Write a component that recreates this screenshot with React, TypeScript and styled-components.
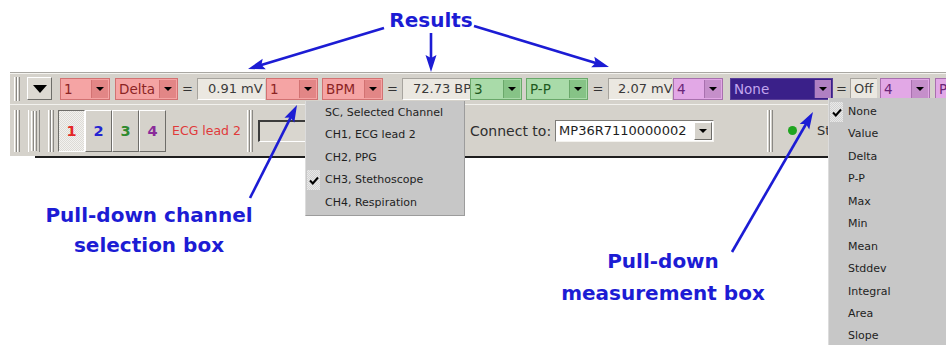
import styled, { createGlobalStyle } from "styled-components";

const GlobalStyle = createGlobalStyle`
    html, body {
        margin: 0;
        padding: 0;
        background: #ffffff;
    }
`;

const BLUE = "#1c1cd4";
const UI_FONT = `"DejaVu Sans", "Liberation Sans", sans-serif`;

type Tone = "red" | "green" | "purple" | "indigo";

const tones: Record<Tone, { bg: string; border: string; btn: string; text: string }> = {
    red: { bg: "#f5a4a4", border: "#d27272", btn: "#e28686", text: "#8c2424" },
    green: { bg: "#a9dba9", border: "#6aa86a", btn: "#86c386", text: "#1f5a1f" },
    purple: { bg: "#e2a8e6", border: "#a870ae", btn: "#c58fca", text: "#6a2478" },
    indigo: { bg: "#3a2089", border: "#5a3f98", btn: "#b080c2", text: "#c3a6ee" },
};

const Page = styled.div`
    position: relative;
    width: 946px;
    height: 345px;
    overflow: hidden;
    background: #ffffff;
    font-family: ${UI_FONT};
`;

const Toolbar = styled.div`
    margin-top: 72px;
    margin-left: 10px;
    width: 936px;
    background: #d5d2cb;
    border-top: 1px solid #a9a7a2;
    box-shadow: inset 0 1px 0 #f4f3ef;
`;

const TopRow = styled.div`
    display: flex;
    align-items: center;
    height: 31px;
    padding-left: 4px;
    white-space: nowrap;
`;

const BottomRow = styled.div`
    position: relative;
    display: flex;
    align-items: center;
    height: 51px;
    padding-left: 4px;
    border-top: 1px solid #f2f1ed;
    white-space: nowrap;

    &::after {
        content: "";
        position: absolute;
        left: 25px;
        right: 0;
        bottom: -2px;
        height: 2px;
        background: #1e1e1e;
    }
`;

const Grip = styled.div<{ $h: number; $ml?: number }>`
    flex: none;
    width: 6px;
    height: ${(p) => p.$h}px;
    margin-left: ${(p) => p.$ml ?? 0}px;
    background: linear-gradient(
        to right,
        #ffffff 0 1px,
        #d5d2cb 1px 2px,
        #8a8884 2px 3px,
        #ffffff 3px 4px,
        #d5d2cb 4px 5px,
        #8a8884 5px 6px
    );
`;

const GripBox = styled.div`
    flex: none;
    display: flex;
    justify-content: center;
    align-items: center;
    width: 10px;
    height: 42px;
    margin-left: 8px;
    border-left: 1px solid #ffffff;
    border-right: 1px solid #8a8884;
`;

const DropButton = styled.div`
    flex: none;
    display: flex;
    align-items: center;
    justify-content: center;
    width: 25px;
    height: 23px;
    margin-left: 7px;
    box-sizing: border-box;
    background: #dcd9d2;
    border-top: 1px solid #ffffff;
    border-left: 1px solid #ffffff;
    border-right: 1px solid #6e6d69;
    border-bottom: 1px solid #6e6d69;
`;

const BigTriangle = styled.div`
    width: 0;
    height: 0;
    border-left: 7px solid transparent;
    border-right: 7px solid transparent;
    border-top: 8px solid #000000;
`;

const Triangle = styled.div`
    width: 0;
    height: 0;
    border-left: 4px solid transparent;
    border-right: 4px solid transparent;
    border-top: 4px solid #000000;
`;

const ComboBox = styled.div<{ $tone: Tone; $w: number; $ml: number }>`
    flex: none;
    display: flex;
    align-items: stretch;
    width: ${(p) => p.$w}px;
    height: 22px;
    margin-left: ${(p) => p.$ml}px;
    box-sizing: border-box;
    background: ${(p) => tones[p.$tone].bg};
    border: 1px solid ${(p) => tones[p.$tone].border};
    color: ${(p) => tones[p.$tone].text};
    font-size: 13.5px;
    overflow: hidden;
`;

const ComboText = styled.div`
    flex: 1;
    padding-left: 3px;
    line-height: 20px;
    overflow: hidden;
`;

const ComboArrow = styled.div<{ $tone: Tone }>`
    flex: none;
    display: flex;
    align-items: center;
    justify-content: center;
    width: 16px;
    margin: 1px;
    background: ${(p) => tones[p.$tone].btn};
    border-left: 1px solid ${(p) => tones[p.$tone].border};
`;

const Equals = styled.div<{ $w: number }>`
    flex: none;
    width: ${(p) => p.$w}px;
    text-align: center;
    font-size: 13px;
    color: #333333;
`;

const ValueBox = styled.div<{ $w: number; $pad: number }>`
    flex: none;
    width: ${(p) => p.$w}px;
    height: 22px;
    box-sizing: border-box;
    padding-left: ${(p) => p.$pad}px;
    background: #ebe8e1;
    border-top: 1px solid #a7a49e;
    border-left: 1px solid #a7a49e;
    border-bottom: 1px solid #ffffff;
    font-size: 13px;
    line-height: 20px;
    color: #3a3a3a;
    overflow: hidden;
`;

const TabGroup = styled.div`
    flex: none;
    display: flex;
    margin-left: 4px;
`;

const TabButton = styled.div<{ $color: string; $pressed?: boolean }>`
    flex: none;
    display: flex;
    align-items: center;
    justify-content: center;
    width: 27px;
    height: 42px;
    box-sizing: border-box;
    font-family: "DejaVu Sans", sans-serif;
    font-weight: bold;
    font-size: 14.5px;
    color: ${(p) => p.$color};
    background: ${(p) =>
        p.$pressed
            ? "repeating-conic-gradient(#f3f2ef 0 25%, #dddbd6 0 50%) 0 0 / 2px 2px"
            : "#d5d2cb"};
    border-top: 1px solid ${(p) => (p.$pressed ? "#6e6d69" : "#ffffff")};
    border-left: 1px solid ${(p) => (p.$pressed ? "#6e6d69" : "#ffffff")};
    border-right: 1px solid ${(p) => (p.$pressed ? "#ffffff" : "#6e6d69")};
    border-bottom: 1px solid ${(p) => (p.$pressed ? "#ffffff" : "#6e6d69")};
`;

const LeadLabel = styled.div`
    flex: none;
    width: 75px;
    margin-left: 6px;
    font-size: 12.5px;
    color: #e03a3a;
`;

const Field = styled.div`
    flex: none;
    width: 200px;
    height: 22px;
    margin-left: 5px;
    box-sizing: border-box;
    background: #d9d6cf;
    border-top: 2px solid #3c3c3c;
    border-left: 2px solid #3c3c3c;
    border-bottom: 1px solid #ffffff;
    border-right: 1px solid #ffffff;
`;

const ConnectLabel = styled.div`
    flex: none;
    margin-left: 12px;
    font-size: 14px;
    color: #2e2e2e;
`;

const DeviceSelect = styled.div`
    flex: none;
    display: flex;
    align-items: stretch;
    width: 159px;
    height: 22px;
    margin-left: 4px;
    box-sizing: border-box;
    background: #ffffff;
    border-top: 1px solid #7d7b77;
    border-left: 1px solid #7d7b77;
    border-bottom: 1px solid #f4f3ef;
    border-right: 1px solid #f4f3ef;
    font-size: 13px;
    color: #1e1e1e;
`;

const DeviceText = styled.div`
    flex: 1;
    padding-left: 3px;
    line-height: 20px;
`;

const DeviceArrow = styled.div`
    flex: none;
    display: flex;
    align-items: center;
    justify-content: center;
    width: 16px;
    margin: 1px;
    background: #d5d2cb;
    border-top: 1px solid #ffffff;
    border-left: 1px solid #ffffff;
    border-right: 1px solid #6e6d69;
    border-bottom: 1px solid #6e6d69;
`;

const StatusDot = styled.div`
    flex: none;
    width: 9px;
    height: 9px;
    margin-left: 15px;
    border-radius: 50%;
    background: #1fa51f;
`;

const StatusText = styled.div`
    flex: none;
    margin-left: 20px;
    font-size: 13px;
    color: #2e2e2e;
`;

const Menu = styled.div<{ $x: number; $y: number; $w: number; $pt: number }>`
    position: absolute;
    left: ${(p) => p.$x}px;
    top: ${(p) => p.$y}px;
    width: ${(p) => p.$w}px;
    box-sizing: border-box;
    padding: ${(p) => p.$pt}px 0 1px 0;
    background: #c7c7c7;
    border-left: 1px solid #dcdcdc;
    border-right: 1px solid #9c9c9c;
    border-bottom: 1px solid #9c9c9c;
    font-size: 11px;
    color: #1e1e1e;
`;

const MenuItem = styled.div`
    position: relative;
    height: 22.45px;
    line-height: 22px;
    padding-left: 19px;
    white-space: nowrap;
`;

const CheckMark = styled.div`
    position: absolute;
    left: 1px;
    top: 1px;
    width: 13px;
    height: 20px;
    display: flex;
    align-items: center;
    justify-content: center;
    background: repeating-conic-gradient(#e9e9e9 0 25%, #d2d2d2 0 50%) 0 0 / 2px 2px;
`;

const Overlay = styled.svg`
    position: absolute;
    left: 0;
    top: 0;
    pointer-events: none;
`;

const Callout = styled.div<{ $cx: number; $y: number; $lh: number }>`
    position: absolute;
    left: ${(p) => p.$cx - 150}px;
    top: ${(p) => p.$y}px;
    width: 300px;
    text-align: center;
    font-family: "DejaVu Sans", sans-serif;
    font-weight: bold;
    font-size: 20px;
    line-height: ${(p) => p.$lh}px;
    color: ${BLUE};
    white-space: nowrap;
`;

type MeasureProps = {
    tone: Tone;
    channel: string;
    chW: number;
    measure: string;
    mTone?: Tone;
    mW: number;
    gap: number;
    eqW: number;
    value: string;
    valW: number;
    valPad?: number;
    ml: number;
};

function Combo({ tone, w, ml, text }: { tone: Tone; w: number; ml: number; text: string }) {
    return (
        <ComboBox $tone={tone} $w={w} $ml={ml}>
            <ComboText>{text}</ComboText>
            <ComboArrow $tone={tone}>
                <Triangle />
            </ComboArrow>
        </ComboBox>
    );
}

function Measurement(m: MeasureProps) {
    return (
        <>
            <Combo tone={m.tone} w={m.chW} ml={m.ml} text={m.channel} />
            <Combo tone={m.mTone ?? m.tone} w={m.mW} ml={m.gap} text={m.measure} />
            <Equals $w={m.eqW}>=</Equals>
            <ValueBox $w={m.valW} $pad={m.valPad ?? 10}>{m.value}</ValueBox>
        </>
    );
}

const measurements: MeasureProps[] = [
    { tone: "red", channel: "1", chW: 50, measure: "Delta", mW: 63, gap: 5, eqW: 19, value: "0.91 mV", valW: 68, ml: 8 },
    { tone: "red", channel: "1", chW: 52, measure: "BPM", mW: 61, gap: 4, eqW: 19, value: "72.73 BPM", valW: 68, ml: 1 },
    { tone: "green", channel: "3", chW: 52, measure: "P-P", mW: 62, gap: 4, eqW: 20, value: "2.07 mV", valW: 64, valPad: 9, ml: 0 },
    { tone: "purple", channel: "4", chW: 50, measure: "None", mTone: "indigo", mW: 103, gap: 7, eqW: 17, value: "Off", valW: 27, valPad: 3, ml: 1 },
];

const channelItems = [
    "SC, Selected Channel",
    "CH1, ECG lead 2",
    "CH2, PPG",
    "CH3, Stethoscope",
    "CH4, Respiration",
];

const measureItems = [
    "None", "Value", "Delta", "P-P", "Max", "Min", "Mean", "Stddev", "Integral", "Area", "Slope",
];

const arrows: { from: [number, number]; to: [number, number] }[] = [
    { from: [384, 28], to: [248, 69] },
    { from: [431, 33], to: [431, 72] },
    { from: [474, 26], to: [609, 67] },
    { from: [250, 198], to: [297, 105] },
    { from: [732, 252], to: [813, 112] },
];

function Arrow({ from, to }: { from: [number, number]; to: [number, number] }) {
    const dx = to[0] - from[0];
    const dy = to[1] - from[1];
    const len = Math.hypot(dx, dy);
    const ux = dx / len;
    const uy = dy / len;
    const headLen = 17;
    const half = 5.5;
    const bx = to[0] - ux * headLen;
    const by = to[1] - uy * headLen;
    const pts = [
        `${to[0]},${to[1]}`,
        `${bx - uy * half},${by + ux * half}`,
        `${bx + ux * 3},${by + uy * 3}`,
        `${bx + uy * half},${by - ux * half}`,
    ].join(" ");
    return (
        <g>
            <line x1={from[0]} y1={from[1]} x2={bx + ux * 4} y2={by + uy * 4} stroke={BLUE} strokeWidth={2.6} />
            <polygon points={pts} fill={BLUE} />
        </g>
    );
}

function Check() {
    return (
        <svg width="10" height="9" viewBox="0 0 10 9">
            <path d="M1 4.5 L3.8 7.5 L9 1.5" fill="none" stroke="#000" strokeWidth="2" />
        </svg>
    );
}

export default function App() {
    return (
        <>
            <GlobalStyle />
            <Page>
                <Toolbar>
                    <TopRow>
                        <Grip $h={24} />
                        <DropButton>
                            <BigTriangle />
                        </DropButton>
                        {measurements.map((m, i) => (
                            <Measurement key={i} {...m} />
                        ))}
                        <Combo tone="purple" w={50} ml={3} text="4" />
                        <Combo tone="purple" w={60} ml={5} text="P-P" />
                    </TopRow>
                    <BottomRow>
                        <Grip $h={42} />
                        <GripBox>
                            <Grip $h={40} />
                        </GripBox>
                        <Grip $h={42} $ml={8} />
                        <TabGroup>
                            <TabButton $color="#e42626" $pressed>1</TabButton>
                            <TabButton $color="#2424d2">2</TabButton>
                            <TabButton $color="#2f8a2f">3</TabButton>
                            <TabButton $color="#8a2a9a">4</TabButton>
                        </TabGroup>
                        <LeadLabel>ECG lead 2</LeadLabel>
                        <Grip $h={42} />
                        <Field />
                        <ConnectLabel>Connect to:</ConnectLabel>
                        <DeviceSelect>
                            <DeviceText>MP36R7110000002</DeviceText>
                            <DeviceArrow>
                                <Triangle />
                            </DeviceArrow>
                        </DeviceSelect>
                        <Grip $h={42} $ml={53} />
                        <StatusDot />
                        <StatusText>Stop</StatusText>
                    </BottomRow>
                </Toolbar>

                <Menu $x={305} $y={101} $w={160} $pt={1}>
                    {channelItems.map((item, i) => (
                        <MenuItem key={item}>
                            {i === 3 && (
                                <CheckMark>
                                    <Check />
                                </CheckMark>
                            )}
                            {item}
                        </MenuItem>
                    ))}
                </Menu>

                <Menu $x={828} $y={98} $w={130} $pt={3}>
                    {measureItems.map((item, i) => (
                        <MenuItem key={item}>
                            {i === 0 && (
                                <CheckMark>
                                    <Check />
                                </CheckMark>
                            )}
                            {item}
                        </MenuItem>
                    ))}
                </Menu>

                <Overlay width={946} height={345}>
                    {arrows.map((a, i) => (
                        <Arrow key={i} from={a.from} to={a.to} />
                    ))}
                </Overlay>

                <Callout $cx={431} $y={8} $lh={24}>Results</Callout>
                <Callout $cx={149} $y={200} $lh={30}>
                    Pull-down channel
                    <br />
                    selection box
                </Callout>
                <Callout $cx={663} $y={245} $lh={32}>
                    Pull-down
                    <br />
                    measurement box
                </Callout>
            </Page>
        </>
    );
}
